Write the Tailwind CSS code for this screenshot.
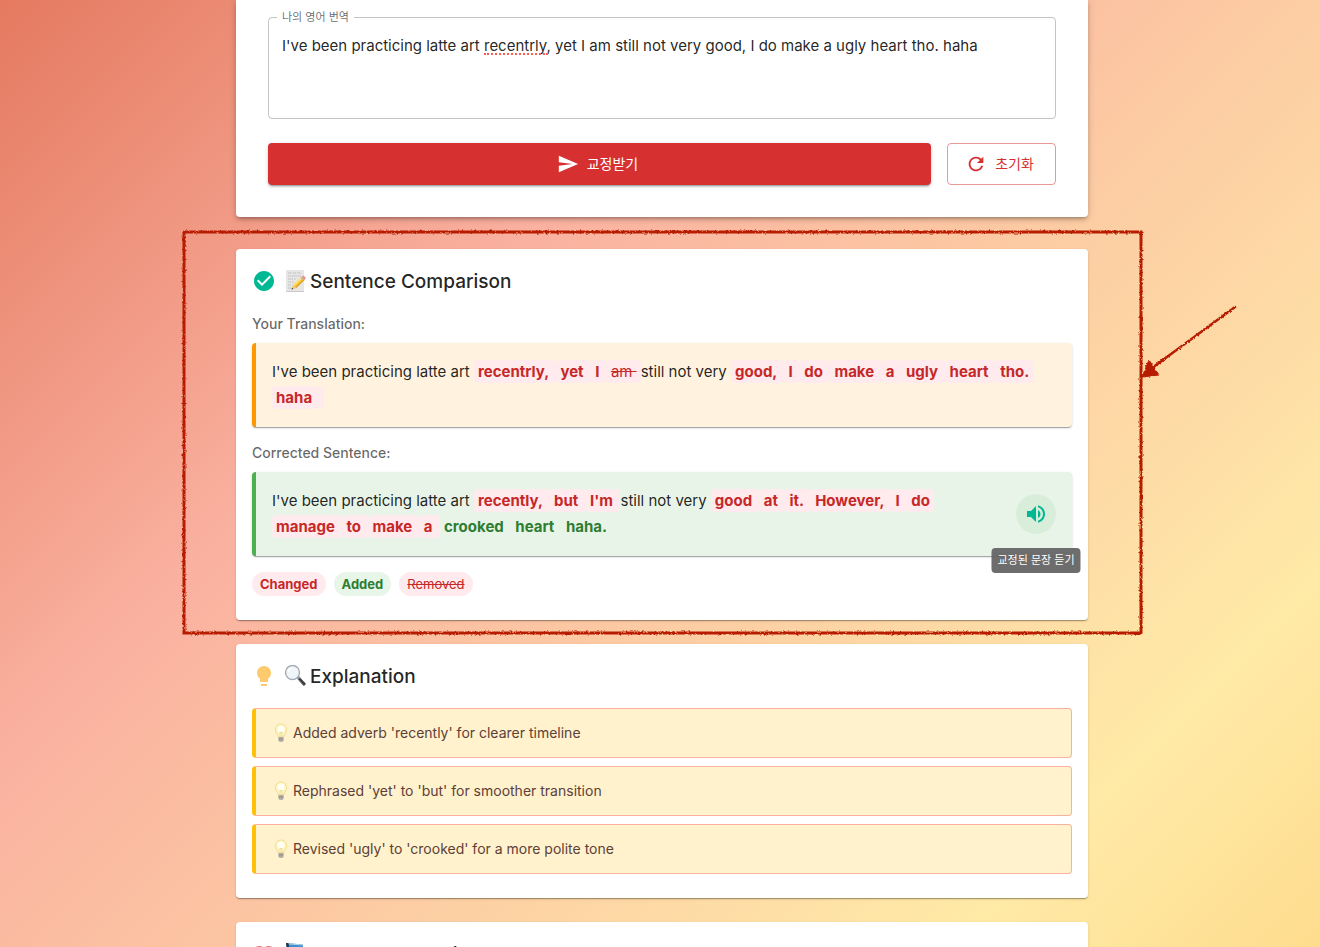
<!DOCTYPE html>
<html lang="ko">
<head>
<meta charset="utf-8">
<meta name="viewport" content="width=device-width, initial-scale=1">
<title>Translation Practice</title>
<script src="https://cdn.jsdelivr.net/npm/@tailwindcss/browser@4"></script>
</head>
<body class="bg-[#fab1a0] font-['Inter','Noto_Sans_CJK_KR',sans-serif] text-black/87">
<svg class="absolute size-0" aria-hidden="true">
  <defs>
    <filter id="chalk" x="-5%" y="-5%" width="110%" height="110%" color-interpolation-filters="sRGB">
      <feTurbulence type="fractalNoise" baseFrequency="0.45" numOctaves="2" seed="4" result="noise"/>
      <feDisplacementMap in="SourceGraphic" in2="noise" scale="3" xChannelSelector="R" yChannelSelector="G"/>
    </filter>
    <symbol id="bulb" viewBox="0 0 16 20">
      <path d="M8 1a5.600 5.600 0 0 0-5.600 5.600c0 3 2.600 4.600 3 7.400h5.200c.4-2.800 3-4.400 3-7.400A5.600 5.600 0 0 0 8 1z" fill="#fff6c4" stroke="#f3dc8e" stroke-width="1"/>
      <ellipse cx="8" cy="6" rx="3.400" ry="3.600" fill="#fffef4"/>
      <path d="M7 14V9l1 1 1-1v5" fill="none" stroke="#e3cf8d" stroke-width=".6"/>
      <path d="M5.500 14h5v3.500L9.500 19h-3l-1-1.500z" fill="#b9b6ad"/>
      <path d="M5.500 15.300h5M5.500 16.800h5" stroke="#85827b" stroke-width=".6"/>
    </symbol>
  </defs>
</svg>
<div class="h-screen overflow-hidden bg-[linear-gradient(135deg,#e17055_-91px,#fab1a0_33.5%,#ffeaa7_83.5%,#fdcb6e_121%)] pl-1">
<main class="mx-auto flex max-w-[852px] flex-col gap-6">

  <section class="mb-2 rounded-b bg-white px-8 pt-[17px] pb-8 shadow-[0_3px_3px_-2px_rgba(0,0,0,.2),0_3px_4px_rgba(0,0,0,.14),0_1px_8px_rgba(0,0,0,.12)]">
    <div class="relative">
      <label for="answer" class="absolute -top-2 left-[9px] bg-white px-[5px] text-[11px] leading-4 text-black/60">나의 영어 번역</label>
      <textarea id="answer" spellcheck="false" class="block h-[102px] w-full resize-none rounded border border-black/23 px-[13px] py-4 text-[15px] leading-6 outline-none">I've been practicing latte art recentrly, yet I am still not very good, I do make a ugly heart tho. haha</textarea>
      <span class="absolute top-9 left-[216px] w-16 border-b-2 border-dotted border-[#ff5a50]"></span>
    </div>
    <div class="mt-6 flex gap-4">
      <button type="button" class="flex h-[42px] flex-1 items-center justify-center gap-2 rounded bg-[#d63031] text-sm text-white shadow-[0_3px_1px_-2px_rgba(0,0,0,.2),0_2px_2px_rgba(0,0,0,.14),0_1px_5px_rgba(0,0,0,.12)]">
        <svg class="-ml-1 size-[22px]" viewBox="0 0 24 24" fill="currentColor" aria-hidden="true"><path d="M2.010 21 23 12 2.010 3 2 10l15 2-15 2z"/></svg>
        교정받기
      </button>
      <button type="button" class="flex h-[42px] w-[109px] items-center justify-center gap-2 rounded border border-[#d63031]/50 text-sm text-[#d63031]">
        <svg class="-ml-1 size-[22px]" viewBox="0 0 24 24" fill="currentColor" aria-hidden="true"><path d="M17.650 6.350C16.200 4.900 14.210 4 12 4c-4.420 0-7.990 3.580-7.990 8s3.570 8 7.990 8c3.730 0 6.840-2.550 7.730-6h-2.080c-.82 2.330-3.040 4-5.650 4-3.310 0-6-2.690-6-6s2.690-6 6-6c1.660 0 3.140.69 4.220 1.780L13 11h7V4z"/></svg>
        초기화
      </button>
    </div>
  </section>

  <section class="relative rounded bg-white p-4 pb-6 shadow-[0_2px_1px_-1px_rgba(0,0,0,.2),0_1px_1px_rgba(0,0,0,.14),0_1px_3px_rgba(0,0,0,.12)]">
    <h2 class="flex h-8 items-center text-[19px] leading-8 font-medium">
      <svg class="mr-2 size-6" viewBox="0 0 24 24" fill="#00b894" aria-hidden="true"><path d="M12 2C6.480 2 2 6.480 2 12s4.480 10 10 10 10-4.480 10-10S17.520 2 12 2m-2 15-5-5 1.410-1.410L10 14.170l7.590-7.590L19 8z"/></svg>
      <svg class="mr-1 size-[22px]" viewBox="0 0 22 22" aria-hidden="true">
        <path d="M2 0h18v22H2z" fill="#e6e6e6"/><path d="M2 21h18v1H2z" fill="#c9c9c9"/>
        <path d="M4 3h4m1 0h3m1 0h4M4 6h3m1 0h5m1 0h3M4 9h5m1 0h2M4 12h3m1 0h2M4 15h3M4 18h3" stroke="#bcbcbc" stroke-width="1" stroke-dasharray="1.500 .5"/>
        <path d="M7.500 19.500 9 15 17.500 7l3 3-8.500 8z" fill="#f7c52d"/><path d="m9 15 8.500-8 1.200 1.200-8.700 8.300z" fill="#fde07a"/><path d="m11.200 17.400 8.400-8.200.9.800-8.500 8z" fill="#d39a17"/>
        <path d="m17.500 7 1.200-1.100c1-.9 3.700 1.800 2.900 2.900L20.500 10z" fill="#ee8f98"/><path d="m16.700 7.700.8-.7 3 3-.8.800z" fill="#a9b5ba"/>
        <path d="M7.500 19.500 9 15l3 3z" fill="#ecc998"/><path d="m7.500 19.500.6-1.800 1.200 1.200z" fill="#333"/>
      </svg>
      <span class="pt-0.5">Sentence Comparison</span>
    </h2>
    <h3 class="mt-4 text-sm leading-[22px] font-medium text-black/60">Your Translation:</h3>
    <p class="mt-2 rounded border-l-4 border-[#ff9800] bg-[#fff2df] p-4 text-[15px] leading-[26px] shadow-[0_2px_1px_-1px_rgba(0,0,0,.2),0_1px_1px_rgba(0,0,0,.14),0_1px_3px_rgba(0,0,0,.12)] [&_b]:rounded [&_b]:bg-[#ffebee] [&_b]:px-1 [&_b]:py-0.5 [&_b]:font-bold [&_b]:text-[#c62828]">I've been practicing latte art <b>recentrly, </b><b>yet </b><b>I </b><del class="rounded bg-[#ffebee] px-1 py-0.5 text-[#c62828] line-through">am </del>still not very <b>good, </b><b>I </b><b>do </b><b>make </b><b>a </b><b>ugly </b><b>heart </b><b>tho. </b><b>haha</b><b></b></p>
    <h3 class="mt-[15px] text-sm leading-[22px] font-medium text-black/60">Corrected Sentence:</h3>
    <div class="mt-2 flex items-center gap-4 rounded border-l-4 border-[#4caf50] bg-[#e9f4e8] p-4 shadow-[0_2px_1px_-1px_rgba(0,0,0,.2),0_1px_1px_rgba(0,0,0,.14),0_1px_3px_rgba(0,0,0,.12)]">
      <p class="flex-1 text-[15px] leading-[26px] [&_b]:rounded [&_b]:bg-[#ffebee] [&_b]:px-1 [&_b]:py-0.5 [&_b]:font-bold [&_b]:text-[#c62828] [&_ins]:px-1 [&_ins]:font-bold [&_ins]:text-[#2e7d32] [&_ins]:no-underline">I've been practicing latte art <b>recently, </b><b>but </b><b>I'm </b>still not very <b>good </b><b>at </b><b>it. </b><b>However, </b><b>I </b><b>do </b><b>manage </b><b>to </b><b>make </b><b>a </b><ins>crooked </ins><ins>heart </ins><ins>haha.</ins></p>
      <div class="relative">
        <button type="button" aria-labelledby="listen-tip" class="flex size-10 items-center justify-center rounded-full bg-[#d8eeda] text-[#00b894]">
          <svg class="size-6" viewBox="0 0 24 24" fill="currentColor" aria-hidden="true"><path d="M3 9v6h4l5 5V4L7 9zm13.500 3c0-1.770-1.020-3.290-2.500-4.030v8.050c1.480-.73 2.500-2.250 2.500-4.020M14 3.230v2.060c2.890.86 5 3.540 5 6.710s-2.110 5.850-5 6.710v2.060c4.010-.91 7-4.490 7-8.770s-2.990-7.860-7-8.770"/></svg>
        </button>
        <span id="listen-tip" role="tooltip" class="absolute top-[54px] left-1/2 -translate-x-1/2 rounded bg-[#616161]/92 px-1.5 py-1 text-[11px] leading-[17px] whitespace-nowrap text-white">교정된 문장 듣기</span>
      </div>
    </div>
    <div class="mt-4 flex gap-2 text-[13px] leading-6">
      <span class="rounded-full bg-[#ffebee] px-2 font-bold text-[#c62828]">Changed</span>
      <span class="rounded-full bg-[#e8f5e9] px-2 font-bold text-[#2e7d32]">Added</span>
      <span class="rounded-full bg-[#ffebee] px-2 text-[#c62828] line-through">Removed</span>
    </div>

    <svg class="pointer-events-none absolute -top-[17px] -left-[52px] h-[calc(100%+30px)] w-[calc(100%+105px)] overflow-visible" aria-hidden="true">
      <rect width="100%" height="100%" fill="none" stroke="#b81c00" stroke-width="3" filter="url(#chalk)"/>
    </svg>
    <svg class="pointer-events-none absolute top-14 left-full ml-[52px] h-20 w-[100px] overflow-visible" viewBox="0 0 100 80" aria-hidden="true">
      <g filter="url(#chalk)"><path d="M95 2 12 63" stroke="#b81c00" stroke-width="2.600" stroke-linecap="round"/><path d="m2 72 7-17 10 15z" fill="#b81c00" stroke="#b81c00"/></g>
    </svg>
  </section>

  <section class="rounded bg-white p-4 pb-6 shadow-[0_2px_1px_-1px_rgba(0,0,0,.2),0_1px_1px_rgba(0,0,0,.14),0_1px_3px_rgba(0,0,0,.12)]">
    <h2 class="flex h-8 items-center text-[19px] leading-8 font-medium">
      <svg class="mr-2 size-6" viewBox="0 0 24 24" fill="#fdcb6e" aria-hidden="true"><path d="M9 21c0 .55.45 1 1 1h4c.55 0 1-.45 1-1v-1H9zm3-19C8.140 2 5 5.140 5 9c0 2.380 1.190 4.470 3 5.740V17c0 .55.45 1 1 1h6c.55 0 1-.45 1-1v-2.260c1.810-1.270 3-3.360 3-5.740 0-3.860-3.140-7-7-7"/></svg>
      <svg class="mr-1 size-[22px]" viewBox="0 0 22 22" aria-hidden="true">
        <path d="m13.500 14 2-2 6 6.200c.8 1-1.300 3.200-2.300 2.300z" fill="#3c3f42"/><path d="m14.500 14.500 5 5.500" stroke="#74797d" stroke-width=".8"/>
        <path d="m12.500 13 2.500-2 1.500 1.500-2.300 2z" fill="#8e969c"/>
        <circle cx="8.500" cy="7.500" r="7" fill="#f1f5f7" stroke="#a3adb5" stroke-width="1.400"/><path d="M4.500 7a4.500 4.500 0 0 1 4-4" fill="none" stroke="#fff" stroke-width="1.400"/>
      </svg>
      <span class="pt-0.5">Explanation</span>
    </h2>
    <ul class="mt-4 flex flex-col gap-2 text-sm leading-5 text-[#5d4037] [&>li]:flex [&>li]:items-center [&>li]:rounded [&>li]:border [&>li]:border-l-4 [&>li]:border-[#fab1a0] [&>li]:border-l-[#ffc107] [&>li]:bg-[#fff2cd] [&>li]:px-[17px] [&>li]:py-3.5">
      <li><svg class="mr-1 h-5 w-4" aria-hidden="true"><use href="#bulb"/></svg>Added adverb 'recently' for clearer timeline</li>
      <li><svg class="mr-1 h-5 w-4" aria-hidden="true"><use href="#bulb"/></svg>Rephrased 'yet' to 'but' for smoother transition</li>
      <li><svg class="mr-1 h-5 w-4" aria-hidden="true"><use href="#bulb"/></svg>Revised 'ugly' to 'crooked' for a more polite tone</li>
    </ul>
  </section>

  <section class="rounded bg-white p-4 shadow-[0_1px_3px_rgba(0,0,0,.12)]">
    <h2 class="flex h-8 items-center text-[19px] leading-8 font-medium">
      <svg class="mr-2 size-6" viewBox="0 0 24 24" fill="#e57373" aria-hidden="true"><path d="M12 21.350 10.550 20.030C5.400 15.360 2 12.280 2 8.500 2 5.420 4.420 4 7.500 4c1.740 0 3.410.81 4.500 2.090C13.090 4.810 14.760 4 16.500 4 19.580 4 22 5.420 22 8.500c0 3.780-3.400 6.860-8.550 11.540z"/></svg>
      <svg class="mr-1 size-[22px]" viewBox="0 0 22 22" aria-hidden="true"><path d="m2 0 17 1.500V21L5 20z" fill="#3a8fd0"/><path d="M2 0h2.500L7 20H5z" fill="#1d3448"/><path d="m4.500.2 14.500 1.300v1L5 1.500z" fill="#b7cfde"/></svg>
      <span class="pt-0.5">Vocabulary &amp; Idioms</span>
    </h2>
  </section>
</main>
</div>
</body>
</html>
